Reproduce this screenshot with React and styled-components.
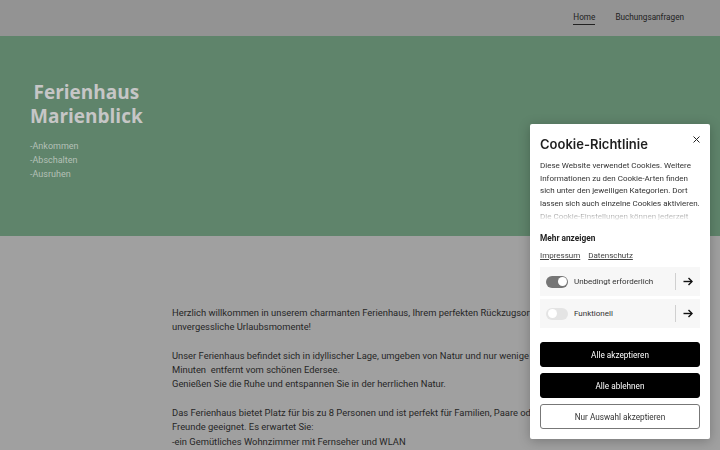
import React, { useState } from 'react';
import styled, { createGlobalStyle } from 'styled-components';

const Global = createGlobalStyle`
  html, body { margin: 0; padding: 0; }
  body {
    font-family: Roboto, "Liberation Sans", sans-serif;
    background: #a0a0a0;
    overflow: hidden;
  }
`;

const Page = styled.div`
  width: 720px;
  height: 450px;
  overflow: hidden;
  background: #a0a0a0;
`;

const Header = styled.header`
  height: 36px;
  background: #939393;
  display: flex;
  justify-content: flex-end;
  align-items: center;
  padding-right: 36px;
`;

const Nav = styled.nav`
  display: flex;
  gap: 20px;
`;

const NavLink = styled.a`
  font-size: 8.2px;
  color: #222;
  text-decoration: none;
  padding-bottom: 2px;
  border-bottom: 1px solid ${p => (p.$active ? '#222' : 'transparent')};
`;

const Hero = styled.section`
  height: 200px;
  box-sizing: border-box;
  background: #5f846b;
  padding: 44px 0 0 30px;
`;

const Title = styled.h1`
  display: inline-block;
  margin: 0;
  text-align: center;
  font-family: "Open Sans", sans-serif;
  font-weight: 700;
  font-size: 19px;
  line-height: 24px;
  color: #c6c6c6;
`;

const Tagline = styled.ul`
  list-style: none;
  margin: 11px 0 0;
  padding: 0;
  font-size: 9px;
  line-height: 14px;
  color: #b4c0b7;
`;

const Content = styled.main`
  padding: 70px 0 0 172px;
`;

const Para = styled.p`
  width: 375px;
  margin: 0 0 14.3px;
  font-size: 9.4px;
  line-height: 14.3px;
  color: #262626;
`;

const Modal = styled.div`
  position: fixed;
  top: 124px;
  right: 10px;
  width: 180px;
  box-sizing: border-box;
  padding: 10px;
  background: #fff;
  border-radius: 2px;
  box-shadow: 0 2px 12px rgba(0, 0, 0, 0.25);
`;

const ModalHead = styled.div`
  display: flex;
  justify-content: space-between;
  align-items: flex-start;
`;

const ModalTitle = styled.h2`
  margin: 0;
  font-family: Inter, "Open Sans", sans-serif;
  font-weight: 600;
  font-size: 13px;
  line-height: 16px;
  padding-top: 2px;
  color: #1f1f1f;
`;

const Close = styled.button`
  border: 0;
  background: none;
  padding: 0;
  margin: 0 -1px 0 0;
  width: 10px;
  height: 10px;
  display: flex;
  align-items: center;
  justify-content: center;
  cursor: pointer;
`;

const Blurb = styled.div`
  margin-top: 8px;
  height: 63px;
  overflow: hidden;
  font-size: 8px;
  line-height: 12.7px;
  color: #333;
  -webkit-mask-image: linear-gradient(to bottom, #000 74%, rgba(0, 0, 0, 0.12) 94%);
  mask-image: linear-gradient(to bottom, #000 74%, rgba(0, 0, 0, 0.12) 94%);
`;

const More = styled.div`
  margin-top: 10px;
  font-size: 8.3px;
  font-weight: 700;
  color: #222;
`;

const Links = styled.div`
  margin-top: 8px;
  display: flex;
  gap: 8px;
`;

const TextLink = styled.a`
  font-size: 8px;
  color: #444;
  text-decoration: underline;
`;

const Categories = styled.div`
  margin-top: 7px;
  display: flex;
  flex-direction: column;
  gap: 3px;
`;

const Category = styled.div`
  height: 29px;
  background: #f7f7f7;
  display: flex;
  align-items: center;
  padding: 0 6px;
`;

const Switch = styled.span`
  width: 22px;
  height: 12px;
  border-radius: 6px;
  background: ${p => (p.$on ? '#767676' : '#e4e4e4')};
  position: relative;
  flex: none;

  &::after {
    content: '';
    position: absolute;
    top: 1.5px;
    left: ${p => (p.$on ? '11.5px' : '1.5px')};
    width: 9px;
    height: 9px;
    border-radius: 50%;
    background: #fff;
  }
`;

const CatLabel = styled.span`
  flex: 1;
  margin-left: 6px;
  font-size: 8px;
  color: #333;
`;

const Divider = styled.span`
  width: 1px;
  height: 17px;
  background: #d0d0d0;
  margin-right: 6px;
`;

const Arrow = styled.span`
  width: 12px;
  display: flex;
  justify-content: center;
`;

const Buttons = styled.div`
  margin-top: 14px;
  display: flex;
  flex-direction: column;
  gap: 6px;
`;

const Button = styled.button`
  height: 25px;
  border-radius: 3px;
  font-family: Roboto, sans-serif;
  font-size: 8.2px;
  cursor: pointer;
  background: ${p => (p.$outline ? '#fff' : '#000')};
  color: ${p => (p.$outline ? '#333' : '#fff')};
  border: 1px solid ${p => (p.$outline ? '#777' : '#000')};
`;

const ArrowIcon = () => (
  <svg width="10" height="9" viewBox="0 0 10 9" fill="none" stroke="#111" strokeWidth="1.4">
    <path d="M0.5 4.5H9" />
    <path d="M5.5 1L9 4.5L5.5 8" />
  </svg>
);

const categories = [
  { name: 'Unbedingt erforderlich', on: true },
  { name: 'Funktionell', on: false },
];

export default function App() {
  const [open, setOpen] = useState(true);
  return (
    <Page>
      <Global />
      <Header>
        <Nav>
          <NavLink $active>Home</NavLink>
          <NavLink>Buchungsanfragen</NavLink>
        </Nav>
      </Header>
      <Hero>
        <Title>
          Ferienhaus
          <br />
          Marienblick
        </Title>
        <Tagline>
          <li>-Ankommen</li>
          <li>-Abschalten</li>
          <li>-Ausruhen</li>
        </Tagline>
      </Hero>
      <Content>
        <Para>
          Herzlich willkommen in unserem charmanten Ferienhaus, Ihrem perfekten Rückzugsort für
          unvergessliche Urlaubsmomente!
        </Para>
        <Para>
          Unser Ferienhaus befindet sich in idyllischer Lage, umgeben von Natur und nur wenige
          Minuten&nbsp; entfernt vom schönen Edersee.
          <br />
          Genießen Sie die Ruhe und entspannen Sie in der herrlichen Natur.
        </Para>
        <Para>
          Das Ferienhaus bietet Platz für bis zu 8 Personen und ist perfekt für Familien, Paare oder
          Freunde geeignet. Es erwartet Sie:
          <br />
          -ein Gemütliches Wohnzimmer mit Fernseher und WLAN
        </Para>
      </Content>
      {open && (
        <Modal>
          <ModalHead>
            <ModalTitle>Cookie-Richtlinie</ModalTitle>
            <Close onClick={() => setOpen(false)} aria-label="Schließen">
              <svg width="7" height="7" viewBox="0 0 7 7" stroke="#222" strokeWidth="1">
                <path d="M0.5 0.5L6.5 6.5M6.5 0.5L0.5 6.5" />
              </svg>
            </Close>
          </ModalHead>
          <Blurb>
            Diese Website verwendet Cookies. Weitere Informationen zu den Cookie-Arten finden sich
            unter den jeweiligen Kategorien. Dort lassen sich auch einzelne Cookies aktivieren. Die
            Cookie-Einstellungen können jederzeit geändert werden.
          </Blurb>
          <More>Mehr anzeigen</More>
          <Links>
            <TextLink>Impressum</TextLink>
            <TextLink>Datenschutz</TextLink>
          </Links>
          <Categories>
            {categories.map(c => (
              <Category key={c.name}>
                <Switch $on={c.on} />
                <CatLabel>{c.name}</CatLabel>
                <Divider />
                <Arrow>
                  <ArrowIcon />
                </Arrow>
              </Category>
            ))}
          </Categories>
          <Buttons>
            <Button>Alle akzeptieren</Button>
            <Button>Alle ablehnen</Button>
            <Button $outline>Nur Auswahl akzeptieren</Button>
          </Buttons>
        </Modal>
      )}
    </Page>
  );
}
